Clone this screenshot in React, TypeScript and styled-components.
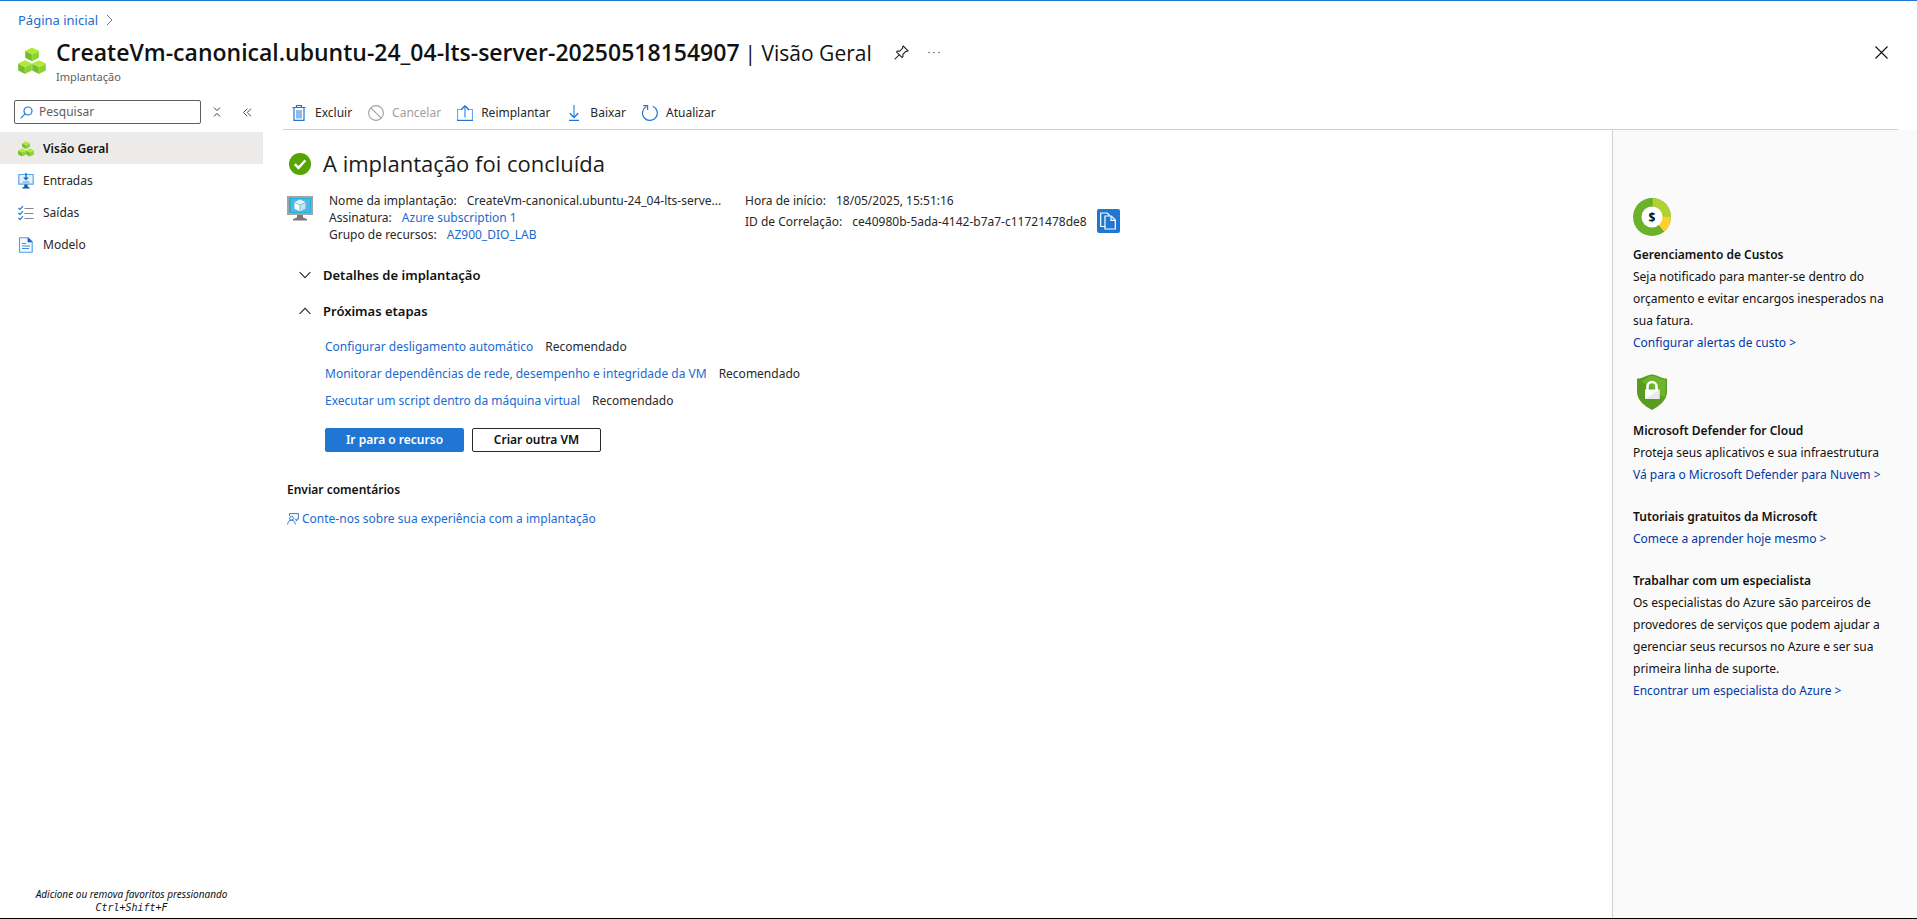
import React from 'react';
import styled, { createGlobalStyle } from 'styled-components';

const BODY_FONT = '"Noto Sans", "Open Sans", sans-serif';
const DISPLAY_FONT = '"Open Sans", "Noto Sans", sans-serif';
const BLUE = '#1f76d3';
const LINK = '#1a6bd0';

const GlobalStyle = createGlobalStyle`
  *, *::before, *::after { box-sizing: border-box; }
  body { margin: 0; background: #fff; }
  h1, h2, h3, p, ul, dl, dd { margin: 0; padding: 0; }
  ul { list-style: none; }
  button { font: inherit; color: inherit; background: none; border: 0; padding: 0; cursor: pointer; }
  svg { display: block; flex: none; }
`;

const Page = styled.div`
  min-height: 100vh;
  display: flex;
  flex-direction: column;
  border-top: 1px solid ${BLUE};
  border-bottom: 1px solid #000;
  font-family: ${BODY_FONT};
  font-size: 12px;
  line-height: 18px;
  color: #292827;
`;

const Link = styled.a`
  color: ${LINK};
  text-decoration: none;
  &:hover { text-decoration: underline; }
`;

const Breadcrumb = styled.nav`
  display: flex;
  align-items: center;
  gap: 8px;
  padding: 10px 18px 4px;
  font-size: 13px;
`;

const Header = styled.header`
  display: flex;
  align-items: flex-start;
  gap: 10px;
  padding: 3px 28px 11px 18px;
`;

const HeaderIcon = styled.div`
  padding-top: 11px;
`;

const TitleBlock = styled.div`
  flex: 1;
`;

const TitleRow = styled.div`
  display: flex;
  align-items: center;
`;

const Title = styled.h1`
  display: flex;
  align-items: baseline;
  gap: 5px;
  font: 600 23px/32px ${DISPLAY_FONT};
  color: #111;
  white-space: nowrap;
`;

const TitleSection = styled.span`
  font-size: 21px;
  font-weight: 400;
`;

const Subtitle = styled.p`
  font-size: 11px;
  line-height: 16px;
  color: #605e5c;
`;

const TitleActions = styled.div`
  display: flex;
  align-items: center;
  gap: 16px;
  margin-left: 22px;
`;

const IconButton = styled.button`
  display: grid;
  place-items: center;
  width: 16px;
  height: 16px;
`;

const CloseButton = styled(IconButton)`
  margin-top: 8px;
`;

const Body = styled.div`
  flex: 1;
  display: flex;
`;

const Sidebar = styled.aside`
  width: 263px;
  flex: none;
  display: flex;
  flex-direction: column;
`;

const SearchRow = styled.div`
  display: flex;
  align-items: center;
  padding: 4px 12px 8px 14px;
`;

const SearchBox = styled.label`
  width: 187px;
  height: 24px;
  display: flex;
  align-items: center;
  gap: 6px;
  padding: 0 5px;
  border: 1px solid #605e5c;
  border-radius: 2px;
`;

const SearchInput = styled.input`
  flex: 1;
  min-width: 0;
  border: 0;
  padding: 0;
  outline: 0;
  background: none;
  font: 12px/18px ${BODY_FONT};
  &::placeholder { color: #605e5c; opacity: 1; }
`;

const SearchActions = styled.div`
  display: flex;
  gap: 14px;
  margin-left: 8px;
`;

const NavItem = styled.a<{ $active?: boolean }>`
  display: flex;
  align-items: center;
  gap: 9px;
  height: 32px;
  padding: 1px 0 0 18px;
  color: ${(p) => (p.$active ? '#111' : '#292827')};
  background: ${(p) => (p.$active ? '#edebe9' : 'transparent')};
  font-weight: ${(p) => (p.$active ? 600 : 400)};
  text-decoration: none;
`;

const SidebarFooter = styled.p`
  margin-top: auto;
  padding-bottom: 3px;
  font-size: 10px;
  line-height: 14px;
  font-style: italic;
  text-align: center;
  color: #111;
`;

const Shortcut = styled.kbd`
  display: block;
  font: italic 10px/14px "DejaVu Sans Mono", monospace;
`;

const Content = styled.div`
  flex: 1;
  min-width: 0;
  display: flex;
  flex-direction: column;
`;

const Toolbar = styled.div`
  display: flex;
  align-items: center;
  gap: 16px;
  height: 34px;
  margin: 0 19px 0 20px;
  padding-left: 8px;
  border-bottom: 1px solid #d2d0ce;
`;

const ToolButton = styled.button`
  display: flex;
  align-items: center;
  gap: 8px;
  &:disabled { color: #a19f9d; cursor: default; }
`;

const Columns = styled.div`
  flex: 1;
  display: flex;
`;

const Main = styled.main`
  flex: 1;
  min-width: 0;
  padding: 18px 24px 24px;
`;

const StatusRow = styled.div`
  display: flex;
  align-items: flex-end;
  gap: 12px;
  padding-left: 2px;
`;

const StatusIcon = styled.div`
  padding-bottom: 3px;
`;

const StatusTitle = styled.h2`
  font: 400 22px/30px ${DISPLAY_FONT};
  color: #1b1a19;
`;

const Info = styled.section`
  display: flex;
  margin-top: 14px;
`;

const InfoIcon = styled.div`
  width: 42px;
  padding-top: 4px;
`;

const InfoList = styled.dl<{ $width?: number }>`
  ${(p) => (p.$width ? `width: ${p.$width}px;` : '')}
  margin-right: 16px;
`;

const InfoLine = styled.div`
  display: flex;
  align-items: center;
  gap: 10px;
  line-height: 17px;
  white-space: nowrap;
`;

const CopyButton = styled.button`
  display: grid;
  place-items: center;
  width: 23px;
  height: 24px;
  border-radius: 2px;
  background: ${BLUE};
`;

const Accordion = styled.div`
  display: grid;
  gap: 18px;
  justify-items: start;
  margin-top: 23px;
  padding-left: 12px;
`;

const AccordionToggle = styled.button`
  display: flex;
  align-items: center;
  gap: 12px;
  font-size: 13px;
  font-weight: 600;
  color: #111;
`;

const Steps = styled.ul`
  margin-top: 13px;
  padding-left: 38px;
  line-height: 27px;
`;

const Step = styled.li`
  display: flex;
  gap: 12px;
`;

const Buttons = styled.div`
  display: flex;
  gap: 8px;
  margin: 14px 0 29px;
  padding-left: 38px;
`;

const ActionButton = styled.button<{ $primary?: boolean }>`
  height: 24px;
  min-width: ${(p) => (p.$primary ? 139 : 129)}px;
  border: 1px solid ${(p) => (p.$primary ? BLUE : '#292827')};
  border-radius: 2px;
  background: ${(p) => (p.$primary ? BLUE : '#fff')};
  color: ${(p) => (p.$primary ? '#fff' : '#111')};
  font-weight: 600;
  line-height: 22px;
`;

const FeedbackTitle = styled.h3`
  font-size: 12px;
  font-weight: 600;
  color: #111;
`;

const FeedbackLink = styled(Link)`
  display: flex;
  align-items: center;
  gap: 3px;
  margin-top: 11px;
`;

const Promo = styled.aside`
  width: 305px;
  flex: none;
  display: flex;
  flex-direction: column;
  gap: 20px;
  padding: 68px 16px 24px 20px;
  border-left: 1px solid #d2d0ce;
  background: #fafafa;
  line-height: 22px;
  color: #111;
`;

const PromoIcon = styled.div`
  height: 38px;
  margin-bottom: 8px;
`;

const PromoTitle = styled.h3`
  font-size: 12px;
  font-weight: 600;
`;

const PromoLink = styled(Link)`
  display: block;
  color: #0039a6;
`;

/* One isometric cube whose top corner is at (x, y). */
const Cube = ({ x, y }: { x: number; y: number }) => (
  <g transform={`translate(${x} ${y})`}>
    <path d="M0 0 6.8 3.4 0 6.9-6.8 3.400Z" fill="#b0ea35" />
    <path d="M-6.800 3.400 0 6.900V13.800L-6.800 10.300Z" fill="#76bc2d" />
    <path d="M6.800 3.400 0 6.900V13.800L6.800 10.300Z" fill="#89d335" />
    <path d="M-6.800 3.400 0 6.900 6.800 3.400M0 6.900v6.900" fill="none" stroke="#c8f36a" strokeWidth=".4" />
  </g>
);

const CubesIcon = ({ size }: { size: number }) => (
  <svg width={size} height={size} viewBox="0 0 28 28">
    <Cube x={14} y={0.4} />
    <Cube x={7} y={13.2} />
    <Cube x={21} y={13.2} />
  </svg>
);

const InputsIcon = () => (
  <svg width="16" height="16" viewBox="0 0 16 16">
    <path d="M.8 1.5h14.4v9.7H.8z" fill="#e3f1fc" stroke="#5aa5e8" strokeWidth="1.2" />
    <path d="M7.3 0h1.400v4.500h2.200L8 7.500 5.100 4.500h2.200z" fill="#0f6fce" />
    <path d="M4.500 9h7" stroke="#4f9de6" />
    <path d="M6.300 11.500h3.400v2.300l2 .7v1H4.300v-1l2-.7z" fill="#14579f" />
  </svg>
);

const OutputsIcon = () => (
  <svg width="16" height="16" viewBox="0 0 16 16" fill="none">
    <path d="M6.500 3.500h9M6.500 8.500h9M6.500 13.500h9" stroke="#8a8886" strokeWidth="1.200" />
    <path d="m.5 3 1.500 1.500L5 1.200M.5 8l1.500 1.500L5 6.200M.5 13l1.500 1.500L5 11.200" stroke="#1f76d3" strokeWidth="1.200" />
  </svg>
);

const TemplateIcon = () => (
  <svg width="16" height="16" viewBox="0 0 16 16">
    <path d="M1.500.8h8.700l4 4v10.400H1.500z" fill="#f2f8fe" stroke="#4f9de6" strokeWidth="1.100" />
    <path d="M9.600.3v5h5z" fill="#0f5fbd" />
    <path d="M4 6.500h4M4 9h8M4 11.500h7" stroke="#3b8ee0" strokeWidth="1.200" />
  </svg>
);

const SearchIcon = () => (
  <svg width="13" height="13" viewBox="0 0 13 13" fill="none" stroke={BLUE} strokeWidth="1.200">
    <circle cx="8" cy="5" r="4" />
    <path d="M5.100 7.900.6 12.400" />
  </svg>
);

const CollapseIcon = () => (
  <svg width="8" height="10" viewBox="0 0 8 10" fill="none" stroke="#3b3a39">
    <path d="m1 .6 3 3 3-3M1 9.400l3-3 3 3" />
  </svg>
);

const DoubleLeftIcon = () => (
  <svg width="9" height="9" viewBox="0 0 9 9" fill="none" stroke="#3b3a39" strokeWidth=".9">
    <path d="m4.300.7-3.800 3.800 3.800 3.800M8 .7 4.200 4.500 8 8.300" />
  </svg>
);

const PinIcon = () => (
  <svg width="15" height="15" viewBox="0 0 15 15" fill="none" stroke="#292827" strokeWidth="1.100">
    <path d="M9.200 1 14 5.800l-1.100.7-1-.2-3 3 .1 2.200-1 1L2.500 7l1-1 2.200.1 3-3-.2-1z" />
    <path d="m5.200 9.800-4.500 4.500" />
  </svg>
);

const MoreIcon = () => (
  <svg width="14" height="3" viewBox="0 0 14 3" fill="#605e5c">
    <circle cx="2" cy="1.500" r=".8" />
    <circle cx="7" cy="1.500" r=".8" />
    <circle cx="12" cy="1.500" r=".8" />
  </svg>
);

const CloseIcon = () => (
  <svg width="13" height="13" viewBox="0 0 13 13" stroke="#111" strokeWidth="1.100">
    <path d="m.5.5 12 12M12.500.5l-12 12" />
  </svg>
);

const ChevronRight = () => (
  <svg width="7" height="12" viewBox="0 0 7 12" fill="none" stroke="#797775">
    <path d="m1 1 5 5-5 5" />
  </svg>
);

const Chevron = ({ up }: { up?: boolean }) => (
  <svg width="12" height="8" viewBox="0 0 12 8" fill="none" stroke="#292827" strokeWidth="1.100">
    <path d={up ? 'm.6 6.800 5.400-5.400 5.400 5.400' : 'm.6 1.200 5.400 5.400 5.400-5.400'} />
  </svg>
);

const DeleteIcon = () => (
  <svg width="16" height="16" viewBox="0 0 16 16" fill="none">
    <path d="M3 3v12.400h10V3" stroke={BLUE} strokeWidth="1.200" fill="#fff" />
    <path d="M5 5h6v8.500H5z" fill="#8dbcec" />
    <path d="M1.500 2.500h13M5.500 2.500v-2h5v2" stroke={BLUE} strokeWidth="1.200" />
  </svg>
);

const CancelIcon = () => (
  <svg width="16" height="16" viewBox="0 0 16 16" fill="none" stroke="#a19f9d" strokeWidth="1.100">
    <circle cx="8" cy="8" r="7.400" />
    <path d="m2.800 2.800 10.400 10.400" />
  </svg>
);

const RedeployIcon = () => (
  <svg width="16" height="16" viewBox="0 0 16 16" fill="none">
    <path d="M3.500 4.500h-3v11M15.500 15.500v-11h-3" stroke="#6aa7e6" strokeWidth="1.200" />
    <path d="M0 15.400h16" stroke={BLUE} strokeWidth="1.200" />
    <path d="M8 1v11.500" stroke="#6aa7e6" strokeWidth="1.600" />
    <path d="M3.800 5 8 .9 12.200 5" stroke={BLUE} strokeWidth="1.400" />
  </svg>
);

const DownloadIcon = () => (
  <svg width="16" height="16" viewBox="0 0 16 16" fill="none">
    <path d="M8 0v12" stroke="#6aa7e6" strokeWidth="1.600" />
    <path d="M3.800 8.200 8 12.400l4.200-4.200M3 15.400h10" stroke={BLUE} strokeWidth="1.400" />
  </svg>
);

const RefreshIcon = () => (
  <svg width="16" height="16" viewBox="0 0 16 16" fill="none" stroke={BLUE} strokeWidth="1.200">
    <path d="M10.800 1.200a7.400 7.400 0 1 1-6.600.4" />
    <path d="M1.200.7h4.400v4.300" />
  </svg>
);

const SuccessIcon = () => (
  <svg width="22" height="22" viewBox="0 0 22 22">
    <circle cx="11" cy="11" r="11" fill="#57a300" />
    <path d="m5.800 11.200 3.700 3.700 6.900-7.600" fill="none" stroke="#fff" strokeWidth="2.400" />
  </svg>
);

const VmIcon = () => (
  <svg width="26" height="25" viewBox="0 0 26 25">
    <path d="M0 0h26v19H0z" fill="#a5a3a1" />
    <path d="M2 2h22v15H2z" fill="#1fb0e4" />
    <path d="M4 3h19v13H4z" fill="#59b4d9" />
    <path d="M13 3.500 18.500 6 13 8.700 7.500 6z" fill="#e4f4fb" />
    <path d="M7.500 6.700 12.600 9.200v6.100L7.500 12.800z" fill="#fff" />
    <path d="M18.500 6.700 13.400 9.200v6.100l5.100-2.500z" fill="#c3e5f3" />
    <path d="M10 19h6v2.500l4 1.500v1.500H6V23l4-1.500z" fill="#7a7876" />
  </svg>
);

const CopyIcon = () => (
  <svg width="16" height="18" viewBox="0 0 16 18" fill={BLUE} stroke="#fff" strokeWidth="1.200">
    <path d="M.7 1h6.500l2 2v11.500H.7z" />
    <path d="M5 4h6.300l4 4v9H5z" />
    <path d="M11 4.300v4h4" fill="none" />
  </svg>
);

const FeedbackIcon = () => (
  <svg width="12" height="12" viewBox="0 0 12 12" fill="none" stroke={LINK} strokeWidth=".9">
    <path d="M2.500 3V.6h8.900v5.500H9.800v1.800L7.700 6.100" />
    <circle cx="4.500" cy="5.300" r="1.900" />
    <path d="M.6 11.400c.4-2.800 1.800-4.200 3.900-4.200s3.500 1.400 3.900 4.200" />
  </svg>
);

const CostIcon = () => (
  <svg width="38" height="38" viewBox="0 0 38 38">
    <circle cx="19" cy="19" r="19" fill="#6bb12a" />
    <path d="M19 19V0a19 19 0 0 1 19 19z" fill="#b0d136" />
    <path d="M19 19h19a19 19 0 0 1-7.300 15z" fill="#fdd02c" />
    <path d="M19 0v19M19 19l11.700 15" fill="none" stroke="#49961b" strokeWidth=".7" />
    <circle cx="19" cy="19" r="10.500" fill="#fff" />
    <text x="19" y="23.500" textAnchor="middle" fontFamily="Open Sans, sans-serif" fontSize="12" fontWeight="700" fill="#111">$</text>
  </svg>
);

const ShieldIcon = () => (
  <svg width="38" height="38" viewBox="0 0 38 38">
    <path d="M4 4.500C10.500 4.500 14 .4 19 .4s8.500 4.100 15 4.100V18c0 8.500-8.500 14.500-15 18C12.500 32.500 4 26.500 4 18z" fill="#5a9b22" />
    <path d="M19 1.800c4.500 0 8 3.800 13.600 4V18c0 2-.6 4-1.600 5.700L8.300 7.200C12.500 5.600 15.500 1.800 19 1.800z" fill="#6cb52d" />
    <path d="M14.500 16v-3.500a4.500 4.500 0 0 1 9 0V16" fill="none" stroke="#fff" strokeWidth="2.600" />
    <path d="M12 15.500h14.500V25H12z" fill="#fff" />
    <path d="m12 25 14.500-9.500V25z" fill="#e9e9e9" />
  </svg>
);

const NAV = [
  { label: 'Visão Geral', icon: <CubesIcon size={16} />, active: true },
  { label: 'Entradas', icon: <InputsIcon /> },
  { label: 'Saídas', icon: <OutputsIcon /> },
  { label: 'Modelo', icon: <TemplateIcon /> },
];

const TOOLS = [
  { label: 'Excluir', icon: <DeleteIcon /> },
  { label: 'Cancelar', icon: <CancelIcon />, disabled: true },
  { label: 'Reimplantar', icon: <RedeployIcon /> },
  { label: 'Baixar', icon: <DownloadIcon /> },
  { label: 'Atualizar', icon: <RefreshIcon /> },
];

const STEPS = [
  'Configurar desligamento automático',
  'Monitorar dependências de rede, desempenho e integridade da VM',
  'Executar um script dentro da máquina virtual',
];

const PROMOS = [
  {
    icon: <CostIcon />,
    title: 'Gerenciamento de Custos',
    text: 'Seja notificado para manter-se dentro do orçamento e evitar encargos inesperados na sua fatura.',
    link: 'Configurar alertas de custo >',
  },
  {
    icon: <ShieldIcon />,
    title: 'Microsoft Defender for Cloud',
    text: 'Proteja seus aplicativos e sua infraestrutura',
    link: 'Vá para o Microsoft Defender para Nuvem >',
  },
  { title: 'Tutoriais gratuitos da Microsoft', link: 'Comece a aprender hoje mesmo >' },
  {
    title: 'Trabalhar com um especialista',
    text: 'Os especialistas do Azure são parceiros de provedores de serviços que podem ajudar a gerenciar seus recursos no Azure e ser sua primeira linha de suporte.',
    link: 'Encontrar um especialista do Azure >',
  },
];

const DEPLOYMENT = 'CreateVm-canonical.ubuntu-24_04-lts-server-20250518154907';
const SHORT_NAME_LENGTH = 41;

export default function App() {
  return (
    <Page>
      <GlobalStyle />
      <Breadcrumb>
        <Link href="#">Página inicial</Link>
        <ChevronRight />
      </Breadcrumb>
      <Header>
        <HeaderIcon><CubesIcon size={28} /></HeaderIcon>
        <TitleBlock>
          <TitleRow>
            <Title>
              {DEPLOYMENT}
              <TitleSection>| Visão Geral</TitleSection>
            </Title>
            <TitleActions>
              <IconButton aria-label="Fixar"><PinIcon /></IconButton>
              <IconButton aria-label="Mais"><MoreIcon /></IconButton>
            </TitleActions>
          </TitleRow>
          <Subtitle>Implantação</Subtitle>
        </TitleBlock>
        <CloseButton aria-label="Fechar"><CloseIcon /></CloseButton>
      </Header>
      <Body>
        <Sidebar>
          <SearchRow>
            <SearchBox>
              <SearchIcon />
              <SearchInput type="text" placeholder="Pesquisar" aria-label="Pesquisar" />
            </SearchBox>
            <SearchActions>
              <IconButton aria-label="Recolher grupos"><CollapseIcon /></IconButton>
              <IconButton aria-label="Recolher menu"><DoubleLeftIcon /></IconButton>
            </SearchActions>
          </SearchRow>
          <nav>
            {NAV.map((n) => (
              <NavItem key={n.label} href="#" $active={n.active}>
                {n.icon}
                {n.label}
              </NavItem>
            ))}
          </nav>
          <SidebarFooter>
            Adicione ou remova favoritos pressionando
            <Shortcut>Ctrl+Shift+F</Shortcut>
          </SidebarFooter>
        </Sidebar>
        <Content>
          <Toolbar role="toolbar">
            {TOOLS.map((t) => (
              <ToolButton key={t.label} disabled={t.disabled}>
                {t.icon}
                {t.label}
              </ToolButton>
            ))}
          </Toolbar>
          <Columns>
            <Main>
              <StatusRow>
                <StatusIcon><SuccessIcon /></StatusIcon>
                <StatusTitle>A implantação foi concluída</StatusTitle>
              </StatusRow>
              <Info>
                <InfoIcon><VmIcon /></InfoIcon>
                <InfoList $width={400}>
                  <InfoLine>
                    <dt>Nome da implantação:</dt>
                    <dd>{DEPLOYMENT.slice(0, SHORT_NAME_LENGTH)}...</dd>
                  </InfoLine>
                  <InfoLine>
                    <dt>Assinatura:</dt>
                    <dd><Link href="#">Azure subscription 1</Link></dd>
                  </InfoLine>
                  <InfoLine>
                    <dt>Grupo de recursos:</dt>
                    <dd><Link href="#">AZ900_DIO_LAB</Link></dd>
                  </InfoLine>
                </InfoList>
                <InfoList>
                  <InfoLine>
                    <dt>Hora de início:</dt>
                    <dd>18/05/2025, 15:51:16</dd>
                  </InfoLine>
                  <InfoLine>
                    <dt>ID de Correlação:</dt>
                    <dd>ce40980b-5ada-4142-b7a7-c11721478de8</dd>
                    <CopyButton aria-label="Copiar"><CopyIcon /></CopyButton>
                  </InfoLine>
                </InfoList>
              </Info>
              <Accordion>
                <AccordionToggle aria-expanded="false"><Chevron />Detalhes de implantação</AccordionToggle>
                <AccordionToggle aria-expanded="true"><Chevron up />Próximas etapas</AccordionToggle>
              </Accordion>
              <Steps>
                {STEPS.map((s) => (
                  <Step key={s}>
                    <Link href="#">{s}</Link>
                    <span>Recomendado</span>
                  </Step>
                ))}
              </Steps>
              <Buttons>
                <ActionButton $primary>Ir para o recurso</ActionButton>
                <ActionButton>Criar outra VM</ActionButton>
              </Buttons>
              <FeedbackTitle>Enviar comentários</FeedbackTitle>
              <FeedbackLink href="#"><FeedbackIcon />Conte-nos sobre sua experiência com a implantação</FeedbackLink>
            </Main>
            <Promo>
              {PROMOS.map((p) => (
                <section key={p.title}>
                  {p.icon && <PromoIcon>{p.icon}</PromoIcon>}
                  <PromoTitle>{p.title}</PromoTitle>
                  {p.text && <p>{p.text}</p>}
                  <PromoLink href="#">{p.link}</PromoLink>
                </section>
              ))}
            </Promo>
          </Columns>
        </Content>
      </Body>
    </Page>
  );
}
